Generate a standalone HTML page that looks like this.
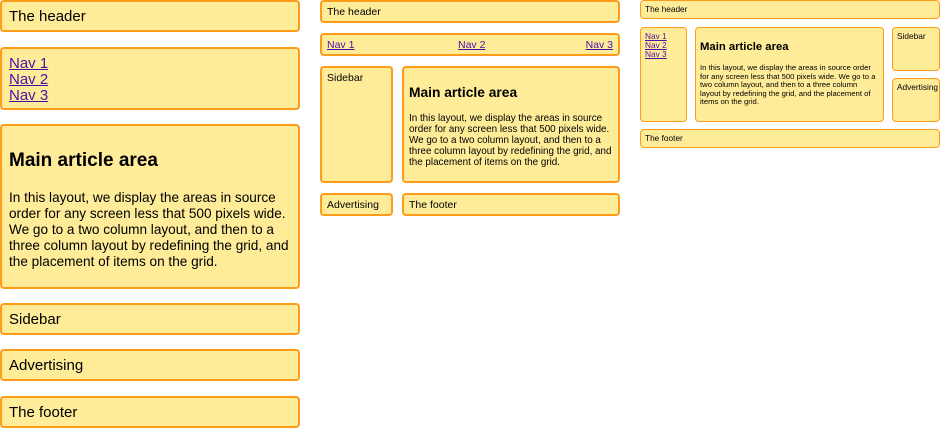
<!DOCTYPE html>
<html><head><meta charset="utf-8"><style>
*{margin:0;padding:0;box-sizing:border-box}
body{width:940px;height:428px;background:#fff;font-family:"Liberation Sans",Arial,sans-serif;color:#000;position:relative;overflow:hidden}
.b{position:absolute;background:#ffec99;border:2px solid #ff9b1a;border-radius:4px;white-space:nowrap}
.s{border-width:1.5px}
.t{position:absolute;white-space:nowrap}
a{color:#4b0fa8;text-decoration:underline}
h1{font-weight:bold;position:absolute;white-space:nowrap}
p{position:absolute;white-space:nowrap}
</style></head><body>
<!-- column 1 -->
<div class="b" style="left:0;top:0;width:300px;height:32px"><span class="t" style="left:7px;top:6px;font-size:15px">The header</span></div>
<div class="b" style="left:0;top:47px;width:300px;height:63px"><div class="t" style="left:7px;top:7px;font-size:15px;line-height:16px"><a>Nav 1</a><br><a>Nav 2</a><br><a>Nav 3</a></div></div>
<div class="b" style="left:0;top:124px;width:300px;height:165px">
<h1 style="left:7px;top:24px;font-size:19px">Main article area</h1>
<p style="left:7px;top:64px;font-size:13.6px;line-height:16px">In this layout, we display the areas in source<br>order for any screen less that 500 pixels wide.<br>We go to a two column layout, and then to a<br>three column layout by redefining the grid, and<br>the placement of items on the grid.</p></div>
<div class="b" style="left:0;top:303px;width:300px;height:32px"><span class="t" style="left:7px;top:6px;font-size:15px">Sidebar</span></div>
<div class="b" style="left:0;top:349px;width:300px;height:32px"><span class="t" style="left:7px;top:6px;font-size:15px">Advertising</span></div>
<div class="b" style="left:0;top:396px;width:300px;height:32px"><span class="t" style="left:7px;top:6px;font-size:15px">The footer</span></div>
<!-- column 2 -->
<div class="b" style="left:320px;top:0;width:300px;height:23px"><span class="t" style="left:5px;top:4px;font-size:10.5px">The header</span></div>
<div class="b" style="left:320px;top:33px;width:300px;height:23px"><span class="t" style="left:5px;top:4px;font-size:10.5px"><a>Nav 1</a></span><span class="t" style="left:136px;top:4px;font-size:10.5px"><a>Nav 2</a></span><span class="t" style="right:5px;top:4px;font-size:10.5px"><a>Nav 3</a></span></div>
<div class="b" style="left:320px;top:66px;width:73px;height:117px"><span class="t" style="left:5px;top:4px;font-size:10.5px">Sidebar</span></div>
<div class="b" style="left:402px;top:66px;width:218px;height:117px">
<h1 style="left:5px;top:17px;font-size:13.8px">Main article area</h1>
<p style="left:5px;top:45px;font-size:9.85px;line-height:11px">In this layout, we display the areas in source<br>order for any screen less that 500 pixels wide.<br>We go to a two column layout, and then to a<br>three column layout by redefining the grid, and<br>the placement of items on the grid.</p></div>
<div class="b" style="left:320px;top:193px;width:73px;height:23px"><span class="t" style="left:5px;top:4px;font-size:10.5px">Advertising</span></div>
<div class="b" style="left:402px;top:193px;width:218px;height:23px"><span class="t" style="left:5px;top:4px;font-size:10.5px">The footer</span></div>
<!-- column 3 -->
<div class="b s" style="left:640px;top:0;width:300px;height:19px"><span class="t" style="left:4px;top:3px;font-size:8.3px">The header</span></div>
<div class="b s" style="left:640px;top:27px;width:47px;height:95px"><div class="t" style="left:4px;top:4px;font-size:8.3px;line-height:9px"><a>Nav 1</a><br><a>Nav 2</a><br><a>Nav 3</a></div></div>
<div class="b s" style="left:695px;top:27px;width:189px;height:95px">
<h1 style="left:4px;top:13px;font-size:11.3px">Main article area</h1>
<p style="left:4px;top:36px;font-size:7.7px;line-height:8.6px">In this layout, we display the areas in source order<br>for any screen less that 500 pixels wide. We go to a<br>two column layout, and then to a three column<br>layout by redefining the grid, and the placement of<br>items on the grid.</p></div>
<div class="b s" style="left:892px;top:27px;width:48px;height:44px"><span class="t" style="left:4px;top:3px;font-size:8.3px">Sidebar</span></div>
<div class="b s" style="left:892px;top:78px;width:48px;height:44px"><span class="t" style="left:4px;top:3px;font-size:8.3px">Advertising</span></div>
<div class="b s" style="left:640px;top:129px;width:300px;height:19px"><span class="t" style="left:4px;top:3px;font-size:8.3px">The footer</span></div>
</body></html>
